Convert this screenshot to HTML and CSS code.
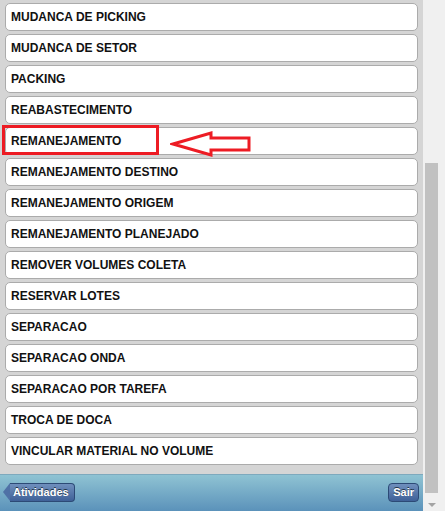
FILE: index.html
```html
<!DOCTYPE html>
<html>
<head>
<meta charset="utf-8">
<link rel="stylesheet" href="styles.css">
</head>
<body>
<div class="page">
  <div class="main">
    <div class="list">
      <div class="row">MUDANCA DE PICKING</div>
      <div class="row">MUDANCA DE SETOR</div>
      <div class="row">PACKING</div>
      <div class="row">REABASTECIMENTO</div>
      <div class="row">REMANEJAMENTO</div>
      <div class="row">REMANEJAMENTO DESTINO</div>
      <div class="row">REMANEJAMENTO ORIGEM</div>
      <div class="row">REMANEJAMENTO PLANEJADO</div>
      <div class="row">REMOVER VOLUMES COLETA</div>
      <div class="row">RESERVAR LOTES</div>
      <div class="row">SEPARACAO</div>
      <div class="row">SEPARACAO ONDA</div>
      <div class="row">SEPARACAO POR TAREFA</div>
      <div class="row">TROCA DE DOCA</div>
      <div class="row">VINCULAR MATERIAL NO VOLUME</div>
    </div>
    <div class="footer">
      <span class="btn back">Atividades</span>
      <span class="btn exit">Sair</span>
    </div>
    <div class="highlight"></div>
    <svg class="arrow" width="82" height="28" viewBox="0 0 82 28">
      <path d="M3 13 L41 2 L41 7 L79 7 L79 19 L41 19 L41 24 Z" fill="none" stroke="#ed1c24" stroke-width="3" stroke-linejoin="miter"/>
    </svg>
  </div>
  <div class="scrollbar">
    <div class="thumb"></div>
    <div class="down"></div>
  </div>
</div>
</body>
</html>
```

FILE: styles.css
```css
html, body {
  margin: 0;
  padding: 0;
}
body {
  font-family: "Liberation Sans", Arial, sans-serif;
  width: 445px;
  height: 511px;
  overflow: hidden;
}
.page {
  display: flex;
  height: 511px;
}
.main {
  position: relative;
  width: 423px;
  display: flex;
  flex-direction: column;
  background: #d5d5d5;
}
.list {
  flex: 1;
  display: flex;
  flex-direction: column;
  gap: 3px;
  padding: 3px 5px 0 5px;
}
.row {
  height: 28px;
  box-sizing: border-box;
  border: 1px solid #ababab;
  border-radius: 5px;
  background: #fff;
  padding-left: 5px;
  font-size: 12px;
  font-weight: bold;
  line-height: 26px;
  color: #111;
  white-space: nowrap;
}
.footer {
  height: 37px;
  background: linear-gradient(#8fc3d3, #5b92ba);
  border-top: 1px solid #7ea9bd;
  box-sizing: border-box;
  display: flex;
  align-items: center;
  justify-content: space-between;
  padding: 0 4px 1px 3px;
}
.btn {
  position: relative;
  height: 19px;
  box-sizing: border-box;
  border: 1px solid #2c4a76;
  border-radius: 4px;
  background: linear-gradient(#6f8fbd, #3f6198);
  color: #fff;
  font-size: 11px;
  font-weight: bold;
  line-height: 17px;
  text-shadow: 0 -1px 0 #234;
}
.back {
  margin-left: 7px;
  padding: 0 5px 0 3px;
  border-left: none;
  border-radius: 0 4px 4px 0;
}
.back::before {
  content: "";
  position: absolute;
  left: -7px;
  top: -1px;
  width: 0;
  height: 0;
  border-top: 9.5px solid transparent;
  border-bottom: 9.5px solid transparent;
  border-right: 7px solid #4f71a6;
}
.exit {
  padding: 0 4px;
}
.highlight {
  position: absolute;
  left: 2px;
  top: 125px;
  width: 157px;
  height: 30px;
  box-sizing: border-box;
  border: 3px solid #ed1c24;
}
.arrow {
  position: absolute;
  left: 170px;
  top: 131px;
}
.scrollbar {
  position: relative;
  width: 22px;
  background: #f0f0f0;
}
.thumb {
  position: absolute;
  left: 2px;
  top: 163px;
  width: 13px;
  height: 330px;
  background: #c1c1c1;
}
.down {
  position: absolute;
  left: 5px;
  top: 503px;
  width: 0;
  height: 0;
  border-left: 4px solid transparent;
  border-right: 4px solid transparent;
  border-top: 4px solid #a3a3a3;
}
```
